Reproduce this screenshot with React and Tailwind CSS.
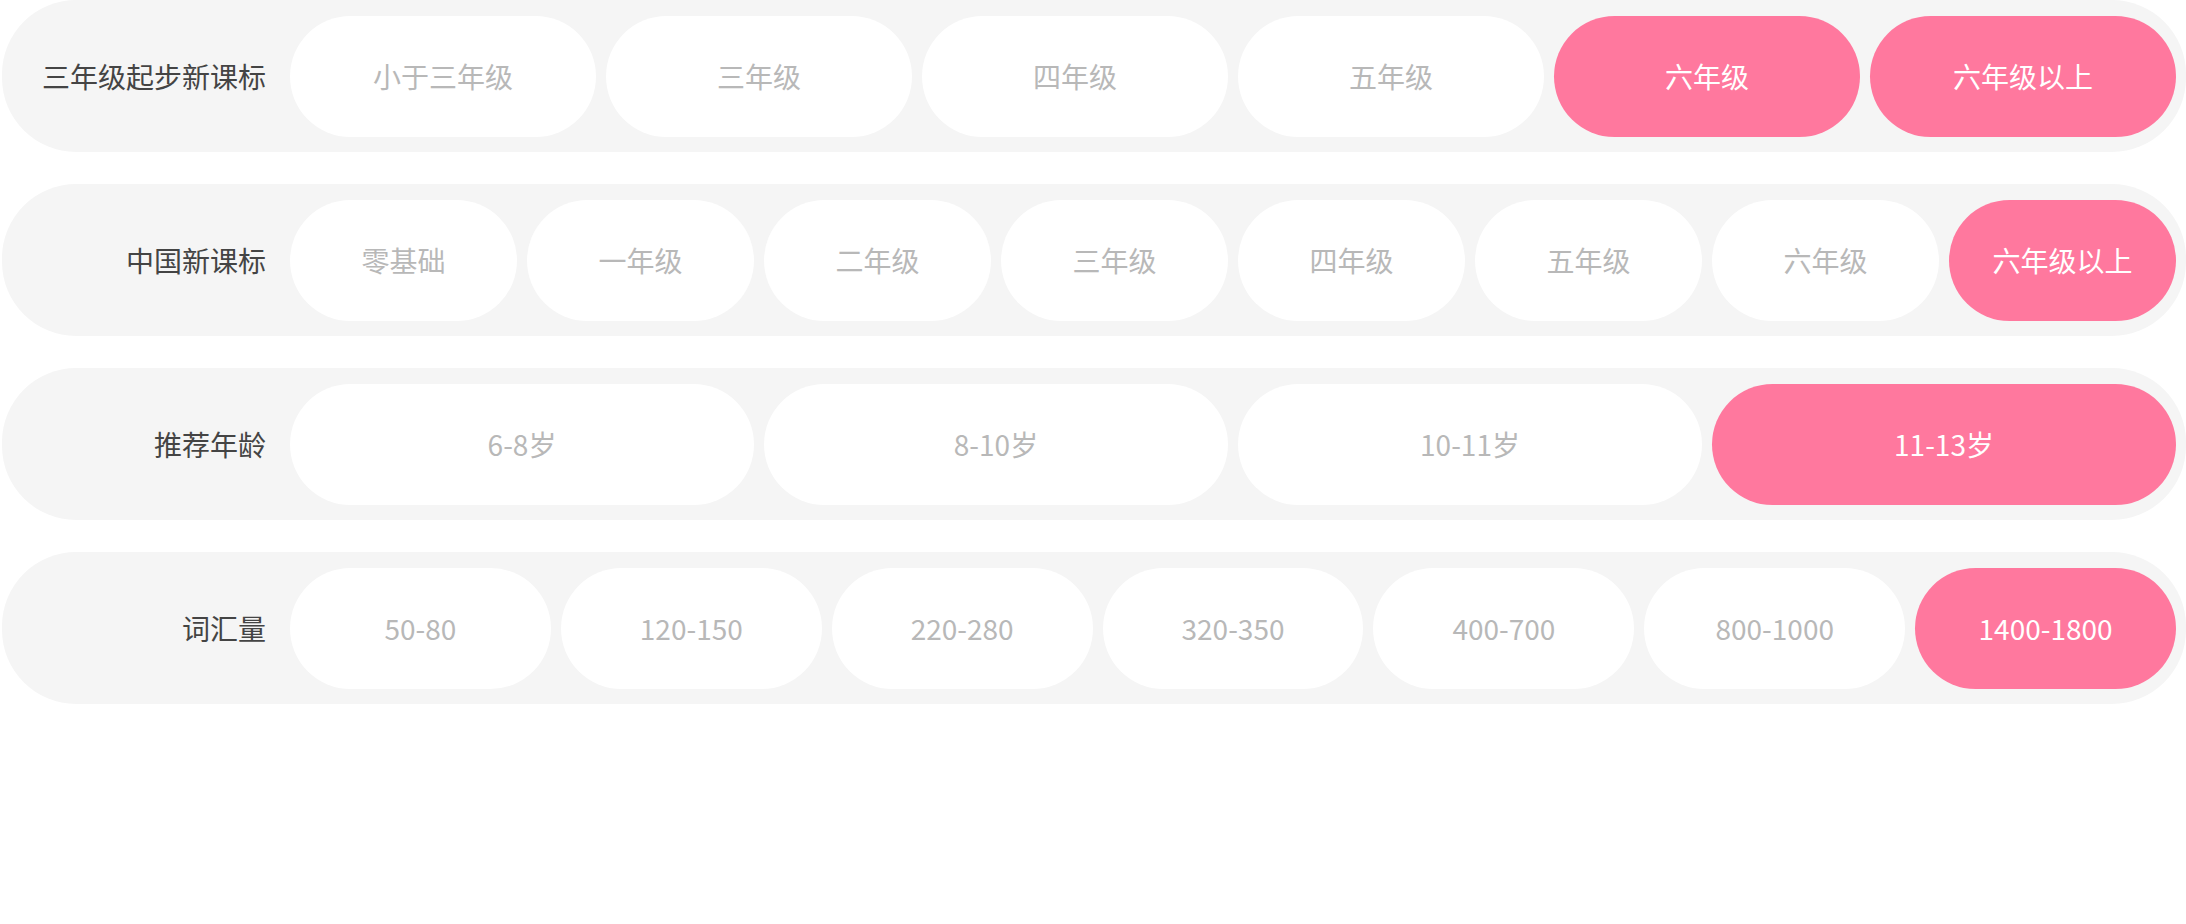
const ROWS = [
  {
    label: '三年级起步新课标',
    items: ['小于三年级', '三年级', '四年级', '五年级', '六年级', '六年级以上'],
    active: [4, 5],
  },
  {
    label: '中国新课标',
    items: ['零基础', '一年级', '二年级', '三年级', '四年级', '五年级', '六年级', '六年级以上'],
    active: [7],
  },
  {
    label: '推荐年龄',
    items: ['6-8岁', '8-10岁', '10-11岁', '11-13岁'],
    active: [3],
  },
  {
    label: '词汇量',
    items: ['50-80', '120-150', '220-280', '320-350', '400-700', '800-1000', '1400-1800'],
    active: [6],
  },
]

function Pill({ text, on }) {
  return (
    <div
      className={[
        'flex h-[121px] flex-1 items-center justify-center rounded-[61px] text-[28px]',
        on ? 'bg-[#ff789e] text-white' : 'bg-white text-[#b8b8b8]',
      ].join(' ')}
    >
      {text}
    </div>
  )
}

function Row({ label, items, active }) {
  return (
    <div className="flex h-[152px] items-center rounded-[74px] bg-[#f5f5f5] py-[15px] pr-[10px]">
      <div className="w-[288px] shrink-0 pr-[24px] text-right text-[28px] text-[#444]">{label}</div>
      <div className="flex flex-1 gap-[10px]">
        {items.map((t, i) => (
          <Pill key={t + i} text={t} on={active.includes(i)} />
        ))}
      </div>
    </div>
  )
}

export default function App() {
  return (
    <div
      className="flex h-[924px] w-full flex-col gap-[32px] bg-white pl-[2px] leading-none"
      style={{ fontFamily: '"Noto Sans CJK SC", "Noto Sans", sans-serif' }}
    >
      {ROWS.map((r) => (
        <Row key={r.label} {...r} />
      ))}
    </div>
  )
}
